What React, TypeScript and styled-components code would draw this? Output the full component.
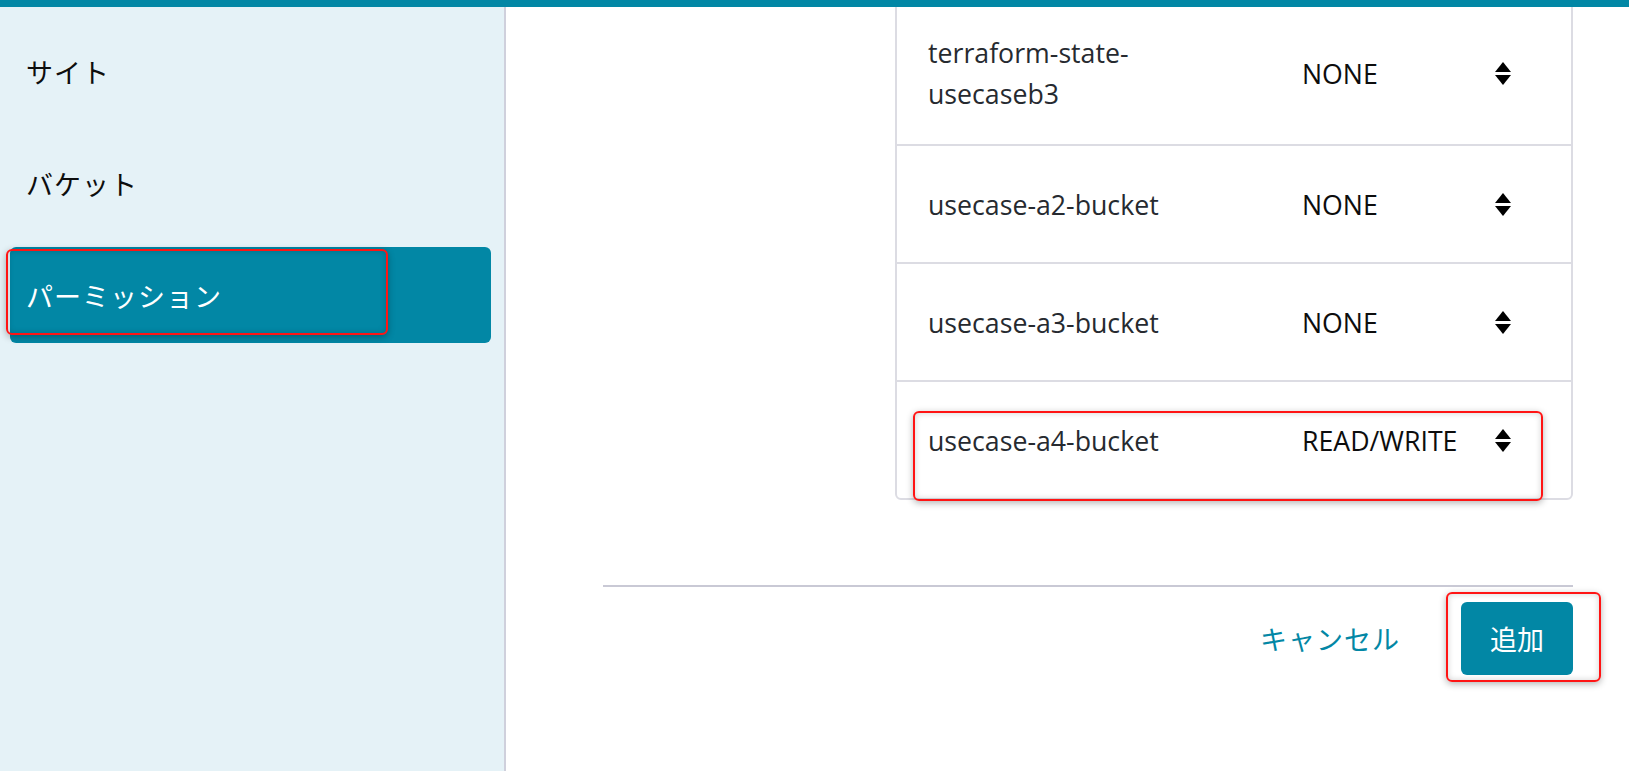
import React from 'react';
import styled, { createGlobalStyle } from 'styled-components';

const teal = '#0287a5';
const tableLine = '#dcdce3';

const GlobalStyle = createGlobalStyle`
  html, body {
    margin: 0;
    padding: 0;
    background: #ffffff;
  }
  body {
    font-family: "Open Sans", "Noto Sans CJK JP", sans-serif;
    color: #111;
  }
`;

// Page frame
const Page = styled.div`
  display: flex;
  flex-direction: column;
  height: 100vh;
  overflow: hidden;
`;

const TopBar = styled.div`
  height: 7px;
  flex-shrink: 0;
  background: ${teal};
`;

const Body = styled.div`
  flex: 1;
  display: flex;
  min-height: 0;
`;

// Sidebar
const Sidebar = styled.nav`
  width: 481px;
  flex-shrink: 0;
  display: flex;
  flex-direction: column;
  gap: 16px;
  padding: 16px 13px 0 10px;
  background: #e5f2f7;
  border-right: 2px solid #cfd0dc;
`;

const NavItem = styled.div<{ $active?: boolean }>`
  position: relative;
  height: 96px;
  display: flex;
  align-items: center;
  padding-left: 16px;
  border-radius: 6px;
  font-family: "Noto Sans CJK JP", sans-serif;
  font-size: 27px;
  letter-spacing: 1px;
  color: ${p => (p.$active ? '#ffffff' : '#0d0d0d')};
  background: ${p => (p.$active ? teal : 'transparent')};
`;

// Red annotation frames drawn over the screenshot
const Mark = styled.div<{ $l: number; $t: number; $w: number; $h: number }>`
  position: absolute;
  left: ${p => p.$l}px;
  top: ${p => p.$t}px;
  width: ${p => p.$w}px;
  height: ${p => p.$h}px;
  box-sizing: border-box;
  border: 2px solid #ff1414;
  border-radius: 6px;
  box-shadow: 0 2px 7px rgba(0, 0, 0, 0.3), inset 0 0 6px rgba(0, 0, 0, 0.18);
  pointer-events: none;
`;

// Main area
const Main = styled.main`
  flex: 1;
  display: flex;
  flex-direction: column;
  padding: 0 56px 0 97px;
  overflow: hidden;
`;

const Table = styled.div`
  align-self: flex-end;
  width: 678px;
  box-sizing: border-box;
  margin-top: -7px;
  border: 2px solid ${tableLine};
  border-radius: 0 0 6px 6px;
`;

const Row = styled.div`
  position: relative;
  display: grid;
  grid-template-columns: 300px 1fr;
  column-gap: 74px;
  align-items: center;
  padding: 30px 39px 30px 31px;
  border-bottom: 2px solid ${tableLine};

  &:last-child {
    border-bottom: none;
  }
`;

const Name = styled.div`
  font-size: 26.7px;
  line-height: 41px;
  color: #262a30;
`;

const SelectBox = styled.div`
  height: 56px;
  display: flex;
  align-items: center;
  justify-content: space-between;
  padding-right: 21px;
  font-size: 26.7px;
  color: #0d0d0d;
`;

const Divider = styled.hr`
  margin: 85px 0 0;
  border: none;
  height: 2px;
  background: #c9c9d5;
`;

const Actions = styled.div`
  display: flex;
  justify-content: flex-end;
  align-items: center;
  gap: 45px;
  margin-top: 15px;
`;

const LinkButton = styled.button`
  border: none;
  background: none;
  padding: 0 16px;
  font-family: "Noto Sans CJK JP", sans-serif;
  font-size: 27px;
  letter-spacing: 1px;
  color: ${teal};
  cursor: pointer;
`;

const PrimaryButton = styled.button`
  position: relative;
  width: 112px;
  height: 73px;
  border: none;
  border-radius: 6px;
  background: ${teal};
  color: #ffffff;
  font-family: "Noto Sans CJK JP", sans-serif;
  font-size: 27px;
  cursor: pointer;
`;

const SortArrows = () => (
  <svg width="16" height="23" viewBox="0 0 16 23" aria-hidden="true">
    <path d="M8 0 L16 10 L0 10 Z" fill="#000" />
    <path d="M0 13 L16 13 L8 23 Z" fill="#000" />
  </svg>
);

const buckets = [
  { name: 'terraform-state-usecaseb3', perm: 'NONE' },
  { name: 'usecase-a2-bucket', perm: 'NONE' },
  { name: 'usecase-a3-bucket', perm: 'NONE' },
  { name: 'usecase-a4-bucket', perm: 'READ/WRITE', marked: true },
];

const App: React.FC = () => (
  <>
    <GlobalStyle />
    <Page>
      <TopBar />
      <Body>
        <Sidebar>
          <NavItem>サイト</NavItem>
          <NavItem>バケット</NavItem>
          <NavItem $active>
            パーミッション
            <Mark $l={-4} $t={2} $w={382} $h={86} />
          </NavItem>
        </Sidebar>
        <Main>
          <Table>
            {buckets.map(b => (
              <Row key={b.name}>
                <Name>{b.name}</Name>
                <SelectBox>
                  <span>{b.perm}</span>
                  <SortArrows />
                </SelectBox>
                {b.marked && <Mark $l={16} $t={29} $w={630} $h={90} />}
              </Row>
            ))}
          </Table>
          <Divider />
          <Actions>
            <LinkButton>キャンセル</LinkButton>
            <PrimaryButton>
              追加
              <Mark $l={-15} $t={-10} $w={155} $h={90} />
            </PrimaryButton>
          </Actions>
        </Main>
      </Body>
    </Page>
  </>
);

export default App;
